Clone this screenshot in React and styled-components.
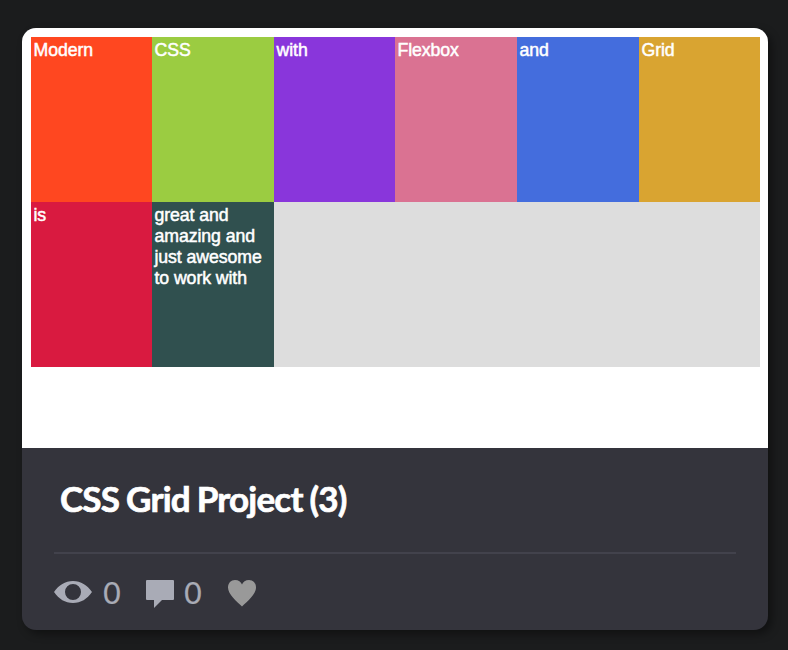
import React from "react";
import styled, { createGlobalStyle } from "styled-components";

const GlobalStyle = createGlobalStyle`
  * { box-sizing: border-box; }
  body { margin: 0; background: #1b1c1d; }
`;

const Page = styled.main`
  height: 650px;
  padding: 28px 20px 20px 22px;
  overflow: hidden;
`;

const Card = styled.article`
  display: flex;
  flex-direction: column;
  height: 602px;
  border-radius: 14px;
  overflow: hidden;
  background: #34343c;
  box-shadow: 4px 4px 8px rgba(0, 0, 0, 0.4);
`;

const Preview = styled.div`
  flex: none;
  height: 420px;
  padding: 9px 8px 0 9px;
  background: #fff;
`;

const Grid = styled.div`
  display: grid;
  grid-template-columns: 121fr 122fr 121fr 122fr 122fr 121fr;
  grid-auto-rows: 165px;
  background: #ddd;
`;

const Cell = styled.div`
  padding: 3px 0 0 2.5px;
  background: ${(p) => p.$color};
  color: #fff;
  font: 17.7px/21px "Liberation Sans", Arial, sans-serif;
  letter-spacing: -0.08px;
  -webkit-text-stroke: 0.5px #fff;
`;

const Footer = styled.footer`
  display: flex;
  flex-direction: column;
  padding: 26px 32px 0;
`;

const Title = styled.h2`
  margin: 0;
  padding: 0 0 0 6px;
  height: 78px;
  color: #fff;
  font: 700 35px/48px Lato, sans-serif;
  letter-spacing: -0.8px;
  word-spacing: -0.8px;
  -webkit-text-stroke: 0.7px #fff;
`;

const Stats = styled.div`
  display: flex;
  height: 78px;
  padding-top: 23px;
  border-top: 2px solid #42424c;
`;

const Stat = styled.div`
  display: flex;
  align-items: flex-start;
  margin-right: ${(p) => p.$after || 0}px;
  color: ${(p) => p.$color || "#a9abb6"};
`;

const Icon = styled.svg`
  display: block;
  flex: none;
  fill: currentColor;
`;

const Count = styled.span`
  width: 18px;
  margin: -2px 0 0 ${(p) => p.$gap}px;
  font: 400 30px/34px Lato, sans-serif;
  text-align: center;
  -webkit-text-stroke: 0.2px currentColor;
`;

const cells = [
  ["Modern", "#ff4720"],
  ["CSS", "#9bcc41"],
  ["with", "#8936db"],
  ["Flexbox", "#da7292"],
  ["and", "#446ddd"],
  ["Grid", "#d9a431"],
  ["is", "#d91a40"],
  ["great and amazing and just awesome to work with", "#30504f"],
];

export default function App() {
  return (
    <Page>
      <GlobalStyle />
      <Card>
        <Preview>
          <Grid>
            {cells.map(([text, color]) => (
              <Cell key={text} $color={color}>{text}</Cell>
            ))}
          </Grid>
        </Preview>
        <Footer>
          <Title>CSS Grid Project (3)</Title>
          <Stats>
            <Stat $after={25}>
              <Icon width="38" height="32" viewBox="0 0 38 32">
                <path fillRule="evenodd" d="M0 15C5 8 11 4 19 4s14 4 19 11C33 22 27 26 19 26S5 22 0 15ZM19 7a8 8 0 1 0 0 16a8 8 0 1 0 0-16Z" />
              </Icon>
              <Count $gap={11}>0</Count>
            </Stat>
            <Stat $after={26}>
              <Icon width="28" height="34" viewBox="0 0 28 34">
                <path d="M1 3H27Q28 3 28 4V22Q28 23 27 23H16L8 31V23H1Q0 23 0 22V4Q0 3 1 3Z" />
              </Icon>
              <Count $gap={10}>0</Count>
            </Stat>
            <Stat $color="#999">
              <Icon width="28" height="34" viewBox="0 0 28 34">
                <path d="M14 29.5C9 24.5 0 17.5 0 10.5C0 6 3 3 7 3C10.5 3 13 5 14 7.5C15 5 17.5 3 21 3C25 3 28 6 28 10.5C28 17.5 19 24.5 14 29.5Z" />
              </Icon>
            </Stat>
          </Stats>
        </Footer>
      </Card>
    </Page>
  );
}
